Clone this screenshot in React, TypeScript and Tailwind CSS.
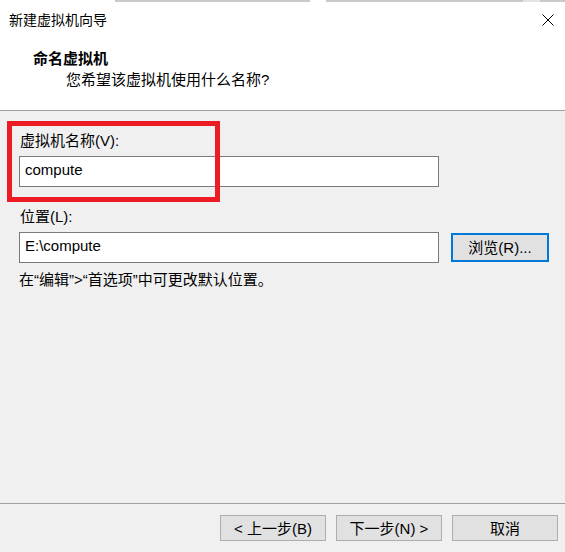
import React from "react";

const font = {
  fontFamily: '"Liberation Sans", "Noto Sans CJK SC", sans-serif',
};

function CloseIcon() {
  return (
    <svg width="12" height="12" viewBox="0 0 12 12" className="block">
      <path d="M0.5 0.5 L11.5 11.5 M11.5 0.5 L0.5 11.5" stroke="#000" strokeWidth="1" />
    </svg>
  );
}

function WizButton({ label }: { label: string }) {
  return (
    <button className="w-[106px] h-[26px] border border-[#adadad] bg-[#e1e1e1] text-[15px] leading-none text-black flex items-center justify-center">
      {label}
    </button>
  );
}

export default function App() {
  return (
    <div
      className="w-[565px] h-[552px] bg-[#f0f0f0] flex flex-col overflow-hidden text-black"
      style={font}
    >
      {/* window edge strip from the screen behind */}
      <div className="h-[2px] flex bg-white">
        <div className="w-[115px]" />
        <div className="w-[195px] bg-[#c9c9c9]" />
        <div className="w-[16px]" />
        <div className="w-[197px] bg-[#c9c9c9]" />
        <div className="w-[17px] bg-[#e4e4e4]" />
        <div className="flex-1 bg-[#c9c9c9]" />
      </div>

      {/* title + header */}
      <div className="bg-white h-[108px]">
        <div className="h-[36px] flex items-center justify-between pl-[9px] pr-[11px]">
          <span className="text-[14px] leading-[20px]">新建虚拟机向导</span>
          <CloseIcon />
        </div>
        <div className="pl-[33px] mt-[11px]">
          <div className="text-[15px] leading-[20px] font-bold">命名虚拟机</div>
          <div className="pl-[33px] mt-[1px] text-[15px] leading-[20px]">
            您希望该虚拟机使用什么名称?
          </div>
        </div>
      </div>
      <div className="h-px bg-[#a0a0a0]" />

      {/* body */}
      <div className="flex-1 relative pl-[19px] pt-[20px]">
        <div className="text-[15px] leading-[20px] pl-px">虚拟机名称(V):</div>
        <div className="mt-[5px] w-[420px] h-[31px] border border-[#7a7a7a] bg-white flex items-center pl-[5px] pb-[2px] text-[15px]">
          compute
        </div>

        <div className="mt-[20px] text-[15px] leading-[20px] pl-px">位置(L):</div>
        <div className="mt-[5px] flex items-center gap-[12px]">
          <div className="w-[420px] h-[31px] border border-[#7a7a7a] bg-white flex items-center pl-[5px] pb-[2px] text-[15px]">
            E:\compute
          </div>
          <button className="w-[98px] h-[29px] border-2 border-[#0078d7] bg-[#e1e1e1] text-[15px] leading-none flex items-center justify-center">
            浏览(R)...
          </button>
        </div>

        <div className="mt-[7px] text-[15px] leading-[20px]">
          在“编辑”&gt;“首选项”中可更改默认位置。
        </div>

        {/* red highlight annotation */}
        <div className="absolute left-[7px] top-[10px] w-[213px] h-[81px] border-[5px] border-[#ed1c24]" />
      </div>

      <div className="h-px bg-[#a0a0a0]" />
      <div className="h-[48px] flex justify-end items-start pt-[11px] pr-[7px] gap-[10px]">
        <WizButton label="< 上一步(B)" />
        <WizButton label="下一步(N) >" />
        <WizButton label="取消" />
      </div>
    </div>
  );
}
